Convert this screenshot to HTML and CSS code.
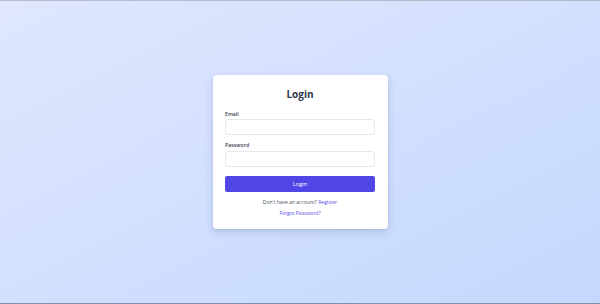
FILE: index.html
```html
<!DOCTYPE html>
<html lang="en">
<head>
<meta charset="utf-8">
<title>Login</title>
<link rel="stylesheet" href="styles.css">
</head>
<body>
<main class="page">
  <form class="card">
    <h1 class="title">Login</h1>
    <div class="field">
      <label class="label" for="email">Email</label>
      <input class="input" id="email" type="email">
    </div>
    <div class="field">
      <label class="label" for="password">Password</label>
      <input class="input" id="password" type="password">
    </div>
    <button class="button" type="button">Login</button>
    <p class="note">Don't have an account? <a class="link" href="#">Register</a></p>
    <p class="note"><a class="link" href="#">Forgot Password?</a></p>
  </form>
</main>
</body>
</html>
```

FILE: styles.css
```css
* { box-sizing: border-box; }
html, body { margin: 0; padding: 0; }
body {
  font-family: "Open Sans", "Noto Sans", sans-serif;
  color: #374151;
}
.page {
  height: 304px;
  display: flex;
  align-items: center;
  justify-content: center;
  background: linear-gradient(to bottom right, #e0e7ff, #c4d8fd);
  border-top: 1px solid #b4bccb;
  border-bottom: 1px solid #8391a8;
}
.card {
  width: 175px;
  background: #ffffff;
  border-radius: 4px;
  box-shadow: 0 3px 8px rgba(30, 50, 110, 0.16), 0 1px 2px rgba(30, 50, 110, 0.08);
  padding: 12px 12.5px 11px;
  display: flex;
  flex-direction: column;
}
.title {
  margin: 0 0 8.5px;
  font-size: 10px;
  line-height: 14px;
  font-weight: 700;
  text-align: center;
  color: #2d3748;
}
.field {
  display: flex;
  flex-direction: column;
  margin-bottom: 6px;
}
.label {
  font-size: 5.2px;
  line-height: 9px;
  font-weight: 600;
  color: #374151;
  margin-bottom: 0.5px;
}
.input {
  height: 16px;
  border: 1px solid #e5e7eb;
  border-radius: 3px;
  background: #fff;
  padding: 0 4px;
  font: inherit;
  outline: none;
}
.button {
  margin-top: 3px;
  height: 16px;
  border: 0;
  border-radius: 2px;
  background: #4f46e5;
  color: #ffffff;
  font-family: inherit;
  font-size: 5.8px;
  cursor: pointer;
}
.note {
  margin: 0;
  font-size: 5px;
  line-height: 9px;
  text-align: center;
  color: #4b5563;
}
.button + .note { margin-top: 6.5px; }
.note + .note { margin-top: 2px; }
.link {
  color: #5a52e8;
  text-decoration: none;
}
```
